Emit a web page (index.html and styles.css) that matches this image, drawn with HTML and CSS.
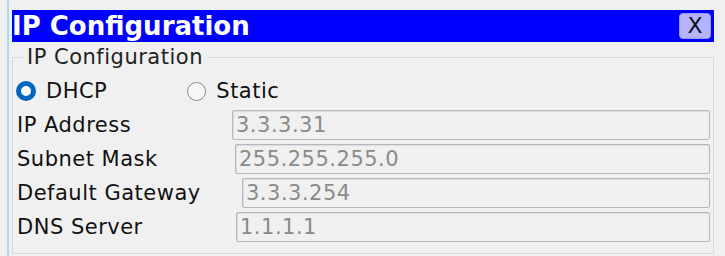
FILE: index.html
```html
<!DOCTYPE html>
<html lang="en">
<head>
    <meta charset="UTF-8">
    <meta name="viewport" content="width=device-width, initial-scale=1.0">
    <title>IP Configuration</title>
    <link rel="stylesheet" href="styles.css">
</head>
<body>
    <div class="frame">
        <div class="dialog">
            <div class="titlebar">
                <span class="title">IP Configuration</span>
                <button class="close">X</button>
            </div>

            <fieldset class="group">
                <legend>IP Configuration</legend>
                <div class="modes">
                    <label class="mode"><span class="radio checked"></span>DHCP</label>
                    <label class="mode"><span class="radio"></span>Static</label>
                </div>
                <div class="row">
                    <span class="field-label">IP Address</span>
                    <input class="field" type="text" value="3.3.3.31" disabled>
                </div>
                <div class="row">
                    <span class="field-label">Subnet Mask</span>
                    <input class="field" type="text" value="255.255.255.0" disabled>
                </div>
                <div class="row">
                    <span class="field-label">Default Gateway</span>
                    <input class="field" type="text" value="3.3.3.254" disabled>
                </div>
                <div class="row">
                    <span class="field-label">DNS Server</span>
                    <input class="field" type="text" value="1.1.1.1" disabled>
                </div>
            </fieldset>
        </div>
    </div>
</body>
</html>
```

FILE: styles.css
```css
body {
    margin: 0;
    background-color: #f0f0f0;
    font-family: 'DejaVu Sans', sans-serif;
    color: #111;
}
.frame {
    height: 256px;
    margin-left: 7px;
    border-left: 2px solid #a6dbe8;
}
.dialog {
    width: 702px;
    margin-left: 3px;
    padding-top: 10px;
}
.titlebar {
    height: 32px;
    background-color: #0000ff;
    display: flex;
    align-items: center;
    justify-content: space-between;
}
.title {
    color: white;
    font-weight: bold;
    font-size: 26px;
    line-height: 32px;
}
.close {
    width: 32px;
    height: 26px;
    margin-right: 3px;
    padding: 0;
    background-color: #b3b3ff;
    border: 1px solid #9a9af0;
    border-radius: 4px;
    font-family: 'DejaVu Sans', sans-serif;
    font-size: 22px;
    line-height: 24px;
    color: #111;
}
.group {
    margin: 3px 0 0 0;
    padding: 0 3px 11px 3px;
    border: 1px solid #d9d9d9;
    font-size: 21px;
    letter-spacing: 0.5px;
}
.group legend {
    margin-left: 7px;
    padding: 0 4px;
    line-height: 24px;
    color: #222;
}
.modes {
    display: flex;
    align-items: center;
    height: 30px;
    margin-top: 7px;
}
.mode {
    display: flex;
    align-items: center;
    gap: 10px;
}
.mode + .mode {
    margin-left: 80px;
}
.radio {
    flex-shrink: 0;
    box-sizing: border-box;
    width: 19px;
    height: 19px;
    border: 1.5px solid #8a8a8a;
    border-radius: 50%;
    background: #f7f7f7;
}
.radio.checked {
    width: 20px;
    height: 20px;
    border: 5.5px solid #0067c0;
    background: white;
}
.row {
    display: flex;
    align-items: center;
    margin-top: 4px;
}
.field-label {
    width: 200px;
    flex-shrink: 0;
    padding-left: 1px;
}
.field {
    flex: 1;
    height: 30px;
    box-sizing: border-box;
    padding: 0 3px;
    border: 1px solid #b4b8c0;
    border-radius: 2px;
    box-shadow: inset 1px 1px 0 #dcdcdc;
    background: #f0f0f0;
    font-family: 'DejaVu Sans', sans-serif;
    font-size: 21px;
    letter-spacing: 0.5px;
    color: #8a8a8a;
}
.row:nth-child(3) .field { margin-left: 15px; }
.row:nth-child(4) .field { margin-left: 18px; }
.row:nth-child(5) .field { margin-left: 25px; }
.row:nth-child(6) .field { margin-left: 19px; }
```
